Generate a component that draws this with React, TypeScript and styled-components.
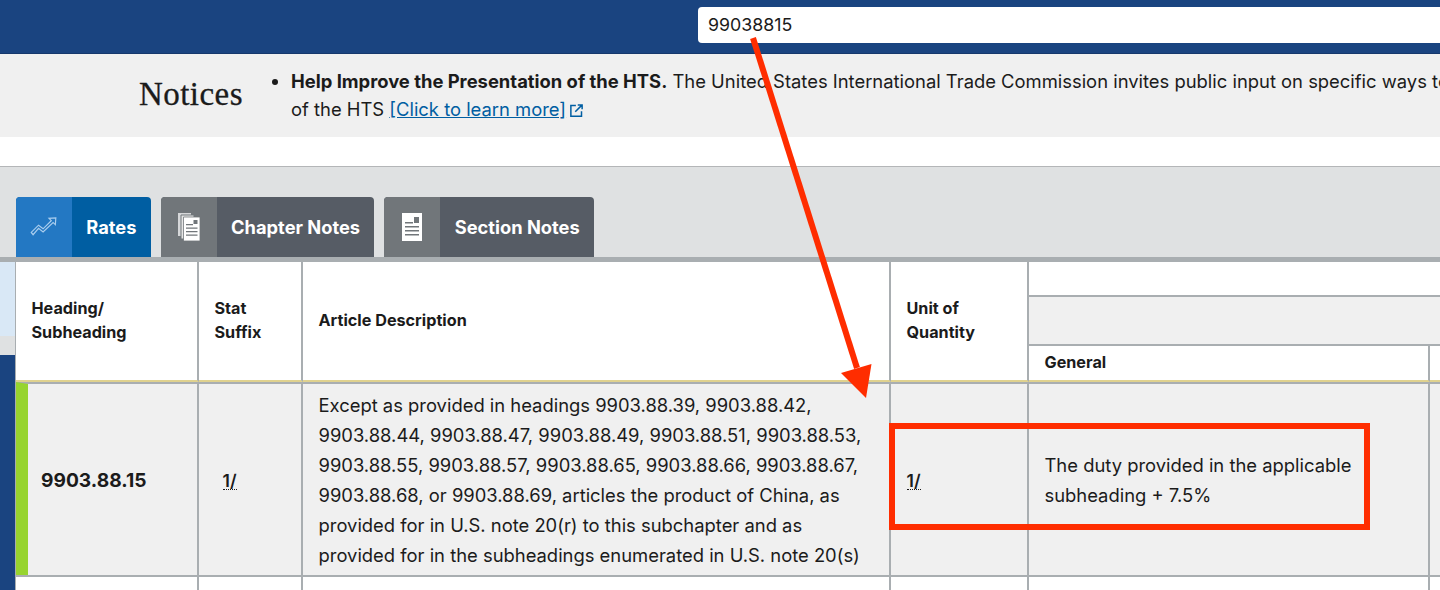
import styled, { createGlobalStyle } from "styled-components";

const GlobalStyle = createGlobalStyle`
  html, body {
    margin: 0;
    padding: 0;
    height: 590px;
    overflow: hidden;
    background: #fff;
    font-family: Inter, "Liberation Sans", sans-serif;
    color: #1b1b1b;
  }
`;

const Page = styled.div`
  position: relative;
  width: 1440px;
  height: 590px;
  overflow: hidden;
`;

const Header = styled.header`
  height: 54px;
  box-sizing: border-box;
  padding: 7px 0 0 698px;
  background: #1a4480;
  border-bottom: 1px solid #16386c;
`;

const SearchBox = styled.div`
  height: 36px;
  box-sizing: border-box;
  padding: 7px 10px;
  background: #fff;
  border-radius: 4px 0 0 4px;
  font-size: 17.8px;
  line-height: 22px;
  color: #1b1b1b;
`;

const NoticeBand = styled.section`
  display: flex;
  height: 83px;
  box-sizing: border-box;
  padding: 13px 0 0 139px;
  background: #f0f0f0;
`;

const NoticeTitle = styled.h2`
  width: 130px;
  flex: none;
  margin: 8px 0 0;
  font: 400 33px/38px "Liberation Serif", serif;
  letter-spacing: 0.45px;
  color: #1b1b1b;
  -webkit-text-stroke: 0.3px #1b1b1b;
`;

const NoticeList = styled.ul`
  margin: 0;
  padding: 0 0 0 22px;
  font-size: 18.4px;
  line-height: 28px;
  white-space: nowrap;
`;

const NoticeLink = styled.a`
  color: #005ea2;
  text-decoration: underline;
`;

const ExternalIcon = styled.svg`
  width: 15px;
  height: 15px;
  margin-left: 3px;
  vertical-align: -2px;
  color: #005ea2;
`;

const Spacer = styled.div`
  height: 29px;
`;

const TabBand = styled.nav`
  display: flex;
  align-items: flex-end;
  gap: 10px;
  height: 91px;
  box-sizing: border-box;
  padding-left: 16px;
  background: #dfe1e2;
  border-top: 1px solid #b4b6b8;
`;

const Tab = styled.div<{ $active?: boolean }>`
  display: flex;
  height: 60px;
  border-radius: 4px 4px 0 0;
  overflow: hidden;
  background: ${(p) => (p.$active ? "#005ea2" : "#565c65")};
  color: #fff;
`;

const TabIcon = styled.div<{ $active?: boolean }>`
  display: flex;
  align-items: center;
  justify-content: center;
  width: 56px;
  background: ${(p) => (p.$active ? "#2378c3" : "#71767a")};
`;

const TabLabel = styled.div`
  padding: 0 14.3px;
  font-size: 18.3px;
  font-weight: 700;
  line-height: 60px;
`;

const TableArea = styled.div`
  display: flex;
  border-top: 5px solid #a9aeb1;
`;

const SideRail = styled.aside`
  display: flex;
  flex: none;
  flex-direction: column;
  width: 15px;
  height: 328px;
  border-right: 1px solid #a9aeb1;
`;

const RailBlock = styled.div<{ $color: string; $height?: number }>`
  flex: ${(p) => (p.$height ? `0 0 ${p.$height}px` : "1")};
  background: ${(p) => p.$color};
`;

const Table = styled.table`
  flex: none;
  width: 1600px;
  table-layout: fixed;
  border-collapse: separate;
  border-spacing: 0;
`;

const HeadCell = styled.th<{ $shaded?: boolean; $gold?: boolean; $height?: number }>`
  box-sizing: border-box;
  height: ${(p) => (p.$height ? `${p.$height}px` : "auto")};
  padding: 0 15.5px 2px;
  text-align: left;
  vertical-align: middle;
  font-size: 16.2px;
  font-weight: 700;
  line-height: 24px;
  background: ${(p) => (p.$shaded ? "#f0f0f0" : "#fff")};
  border-right: 2px solid #a9aeb1;
  border-bottom: 2px solid ${(p) => (p.$gold ? "#e0d28f" : "#a9aeb1")};
`;

const BodyCell = styled.td<{ $shaded?: boolean; $flag?: boolean; $tall?: boolean }>`
  box-sizing: border-box;
  height: ${(p) => (p.$tall ? "193px" : "40px")};
  padding: ${(p) => (p.$flag ? "0 0 0 13px" : "0 15.5px")};
  vertical-align: middle;
  font-size: 18.4px;
  line-height: 30px;
  background: ${(p) => (p.$shaded ? "#f0f0f0" : "#fff")};
  border-top: 2px solid #a9aeb1;
  border-right: 2px solid #a9aeb1;
  border-left: ${(p) => (p.$flag ? "12px solid #97d42f" : "0")};
`;

const HeadingNumber = styled.strong`
  font-size: 19.2px;
  font-weight: 700;
`;

const Footnote = styled.span<{ $center?: boolean }>`
  display: inline-block;
  margin-left: ${(p) => (p.$center ? "8px" : "0")};
  font-size: 17.5px;
  font-weight: 600;
  line-height: 17px;
  border-bottom: 1px dotted #1b1b1b;
`;

const RedBox = styled.div`
  position: absolute;
  left: 889px;
  top: 423px;
  width: 481px;
  height: 107px;
  box-sizing: border-box;
  border: 6px solid #ff2d00;
`;

const ArrowLayer = styled.svg`
  position: absolute;
  left: 0;
  top: 0;
  pointer-events: none;
`;

const RatesIcon = () => (
  <svg width="28" height="20" viewBox="0 0 30 22" fill="none" stroke="#a9cdee" strokeWidth="1.3">
    <path d="M1 17l8-8 5 4 9-9-2.500-2.500L28 1l-.5 7.500L25 6l-11 10.500-5-4-6 7z" />
  </svg>
);

const DocsIcon = () => (
  <svg width="22" height="28" viewBox="0 0 22 28">
    <path d="M0 0h13v23H0z" fill="#d6d7d9" />
    <path d="M3 2h13v24H3z" fill="#e6e6e6" stroke="#71767a" strokeWidth="1" />
    <path d="M5.500 4H22v24H5.500z" fill="#fff" stroke="#71767a" strokeWidth="0.8" />
    <path d="M8 11h7v1.300H8zM8 14.500h11.500v1.300H8zM8 18h11.500v1.300H8zM8 21.500h11.500v1.300H8zM15.500 7h4v4h-4z" fill="#71767a" />
  </svg>
);

const DocIcon = () => (
  <svg width="20" height="28" viewBox="0 0 20 28">
    <path d="M0 0h20v28H0z" fill="#fff" />
    <path d="M3 9h8v1.600H3zM3 13h14v1.600H3zM3 17h14v1.600H3zM3 21h14v1.600H3zM12 4h5v6h-5z" fill="#71767a" />
  </svg>
);

const App = () => {
  return (
    <Page>
      <GlobalStyle />
      <Header>
        <SearchBox>99038815</SearchBox>
      </Header>
      <NoticeBand>
        <NoticeTitle>Notices</NoticeTitle>
        <NoticeList>
          <li>
            <strong>Help Improve the Presentation of the HTS.</strong> The United States
            International Trade Commission invites public input on specific ways to
            <br />
            of the HTS <NoticeLink href="#">[Click to learn more]</NoticeLink>
            <ExternalIcon viewBox="0 0 24 24" fill="none" stroke="currentColor" strokeWidth="2.4">
              <path d="M11 4H3v17h17v-8M14 3h7v7M21 3L10 14" />
            </ExternalIcon>
          </li>
        </NoticeList>
      </NoticeBand>
      <Spacer />
      <TabBand>
        <Tab $active>
          <TabIcon $active>
            <RatesIcon />
          </TabIcon>
          <TabLabel>Rates</TabLabel>
        </Tab>
        <Tab>
          <TabIcon>
            <DocsIcon />
          </TabIcon>
          <TabLabel>Chapter Notes</TabLabel>
        </Tab>
        <Tab>
          <TabIcon>
            <DocIcon />
          </TabIcon>
          <TabLabel>Section Notes</TabLabel>
        </Tab>
      </TabBand>
      <TableArea>
        <SideRail>
          <RailBlock $color="#d9e8f6" $height={74} />
          <RailBlock $color="#dfe1e2" $height={19} />
          <RailBlock $color="#1a4480" />
        </SideRail>
        <Table>
          <colgroup>
            <col width="183" />
            <col width="104" />
            <col width="588" />
            <col width="138" />
            <col width="401" />
            <col width="186" />
          </colgroup>
          <thead>
            <tr>
              <HeadCell rowSpan={3} $gold>
                Heading/
                <br />
                Subheading
              </HeadCell>
              <HeadCell rowSpan={3} $gold>
                Stat
                <br />
                Suffix
              </HeadCell>
              <HeadCell rowSpan={3} $gold>
                Article Description
              </HeadCell>
              <HeadCell rowSpan={3} $gold>
                Unit of
                <br />
                Quantity
              </HeadCell>
              <HeadCell colSpan={2} $height={35} />
            </tr>
            <tr>
              <HeadCell colSpan={2} $shaded $height={49} />
            </tr>
            <tr>
              <HeadCell $gold $height={36}>
                General
              </HeadCell>
              <HeadCell $gold />
            </tr>
          </thead>
          <tbody>
            <tr>
              <BodyCell $shaded $flag $tall>
                <HeadingNumber>9903.88.15</HeadingNumber>
              </BodyCell>
              <BodyCell $shaded $tall>
                <Footnote $center>1/</Footnote>
              </BodyCell>
              <BodyCell $shaded $tall>
                Except as provided in headings 9903.88.39, 9903.88.42, 9903.88.44, 9903.88.47,
                9903.88.49, 9903.88.51, 9903.88.53, 9903.88.55, 9903.88.57, 9903.88.65, 9903.88.66,
                9903.88.67, 9903.88.68, or 9903.88.69, articles the product of China, as provided
                for in U.S. note 20(r) to this subchapter and as
                <br />
                provided for in the subheadings enumerated in U.S. note 20(s)
              </BodyCell>
              <BodyCell $shaded $tall>
                <Footnote>1/</Footnote>
              </BodyCell>
              <BodyCell $shaded $tall>
                The duty provided in the applicable subheading + 7.5%
              </BodyCell>
              <BodyCell $shaded $tall />
            </tr>
            <tr>
              <BodyCell />
              <BodyCell />
              <BodyCell />
              <BodyCell />
              <BodyCell />
              <BodyCell />
            </tr>
          </tbody>
        </Table>
      </TableArea>
      <RedBox />
      <ArrowLayer width="1440" height="590" viewBox="0 0 1440 590">
        <path d="M753 38L857 368" stroke="#ff2d00" strokeWidth="6" />
        <path d="M866 398L841 373L871.500 364z" fill="#ff2d00" />
      </ArrowLayer>
    </Page>
  );
};

export default App;
